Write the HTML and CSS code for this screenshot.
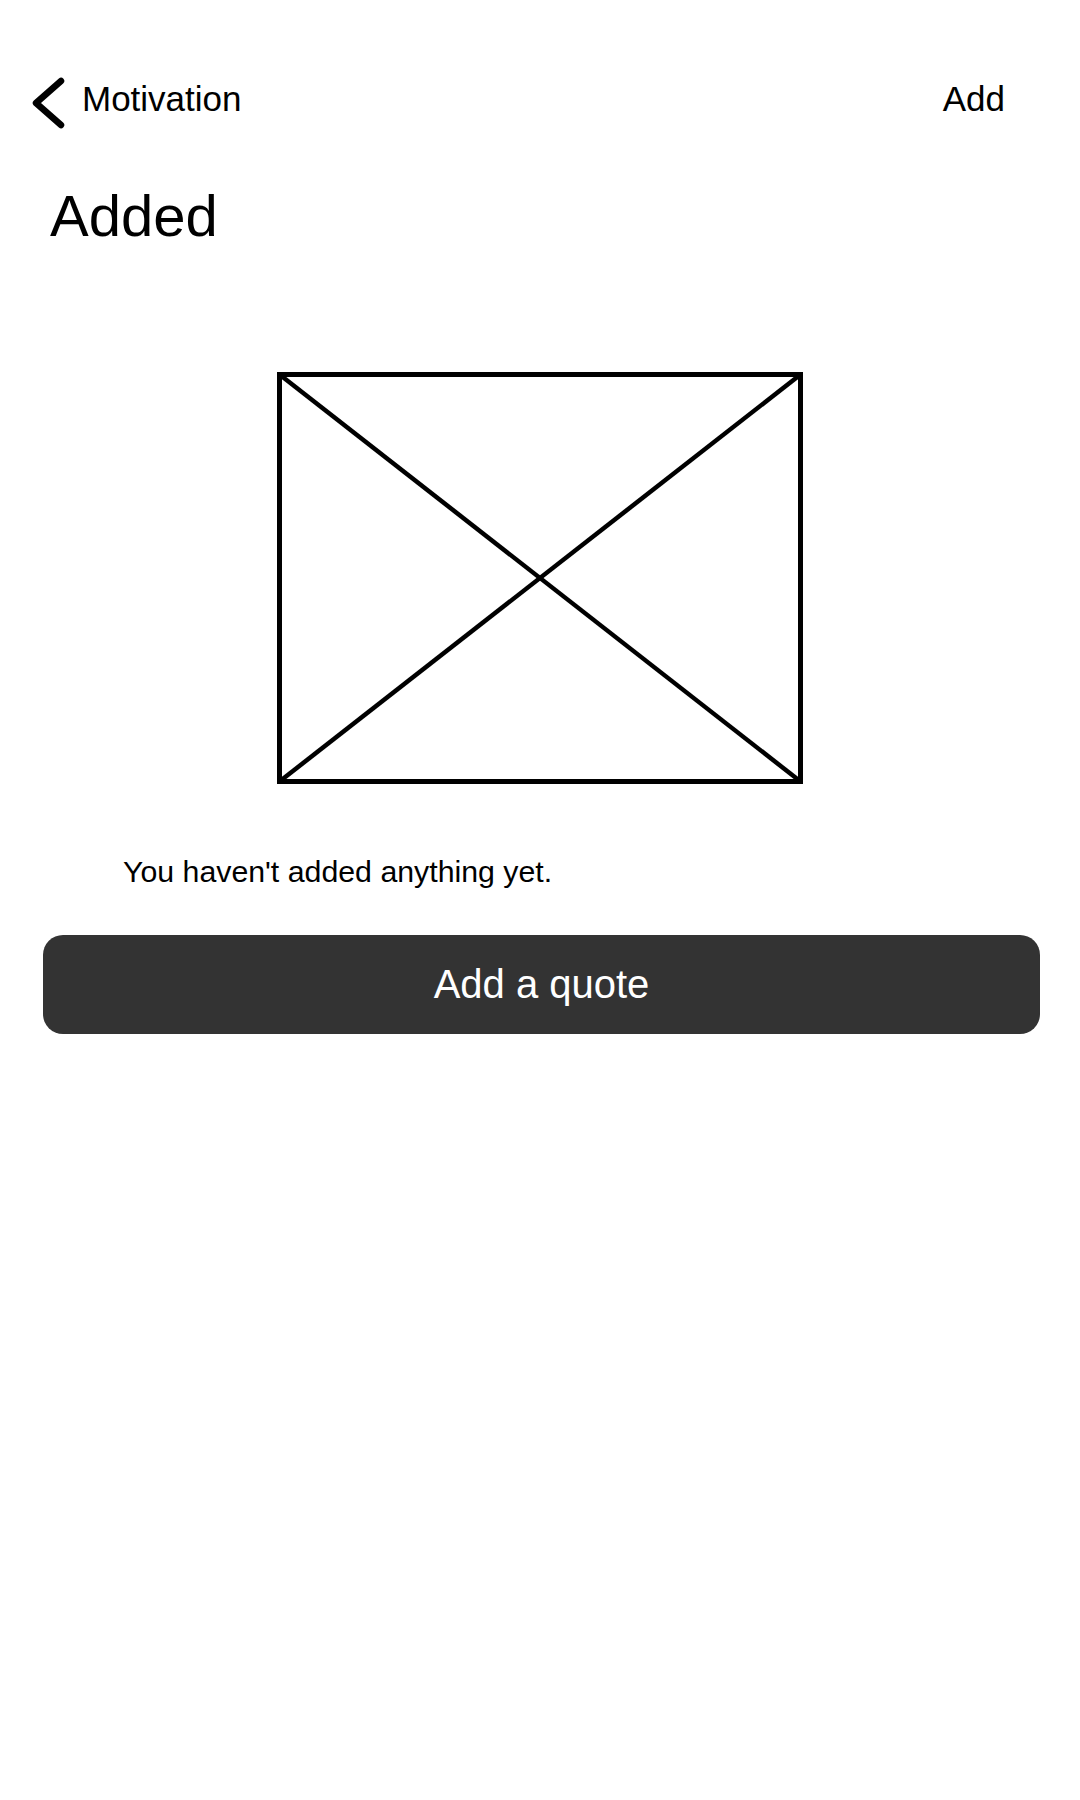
FILE: index.html
```html
<!DOCTYPE html>
<html lang="en">
<head>
<meta charset="utf-8">
<title>Added</title>
<link rel="stylesheet" href="styles.css">
</head>
<body>
<div class="screen">
  <header class="nav">
    <div class="back">
      <svg class="chevron" width="36" height="52" viewBox="0 0 36 52">
        <polyline points="31,4 6,26 31,48" fill="none" stroke="#000" stroke-width="6.5" stroke-linecap="round" stroke-linejoin="round"/>
      </svg>
      <span class="back-label">Motivation</span>
    </div>
    <span class="nav-action">Add</span>
  </header>
  <h1 class="title">Added</h1>
  <div class="placeholder">
    <svg width="526" height="412" viewBox="0 0 526 412">
      <rect x="2.5" y="2.5" width="521" height="407" fill="none" stroke="#000" stroke-width="5"/>
      <line x1="2.5" y1="2.5" x2="523.5" y2="409.5" stroke="#000" stroke-width="4.5"/>
      <line x1="523.5" y1="2.5" x2="2.5" y2="409.5" stroke="#000" stroke-width="4.5"/>
    </svg>
  </div>
  <p class="empty">You haven't added anything yet.</p>
  <button class="primary">Add a quote</button>
</div>
</body>
</html>
```
FILE: styles.css
```css
html, body {
  margin: 0;
  padding: 0;
  background: #ffffff;
}
body {
  font-family: "Liberation Sans", Arial, sans-serif;
  color: #000;
}
.screen {
  display: flex;
  flex-direction: column;
}
.nav {
  display: flex;
  justify-content: space-between;
  align-items: center;
  padding: 69px 75px 0 30px;
}
.back {
  display: flex;
  align-items: center;
  gap: 16px;
}
.chevron {
  display: block;
  margin-top: 8px;
}
.back-label,
.nav-action {
  font-size: 35px;
  line-height: 40px;
}
.title {
  margin: 54px 0 0 50px;
  font-size: 58px;
  line-height: 66px;
  font-weight: 400;
}
.placeholder {
  display: flex;
  justify-content: center;
  margin-top: 123px;
}
.placeholder svg {
  display: block;
}
.empty {
  margin: 71px 0 0 123px;
  font-size: 30.3px;
  line-height: 34px;
}
.primary {
  margin: 46px 40px 0 43px;
  height: 99px;
  border: none;
  border-radius: 20px;
  background: #333333;
  color: #ffffff;
  font-family: "Liberation Sans", Arial, sans-serif;
  font-size: 40px;
  padding: 0;
}
```
